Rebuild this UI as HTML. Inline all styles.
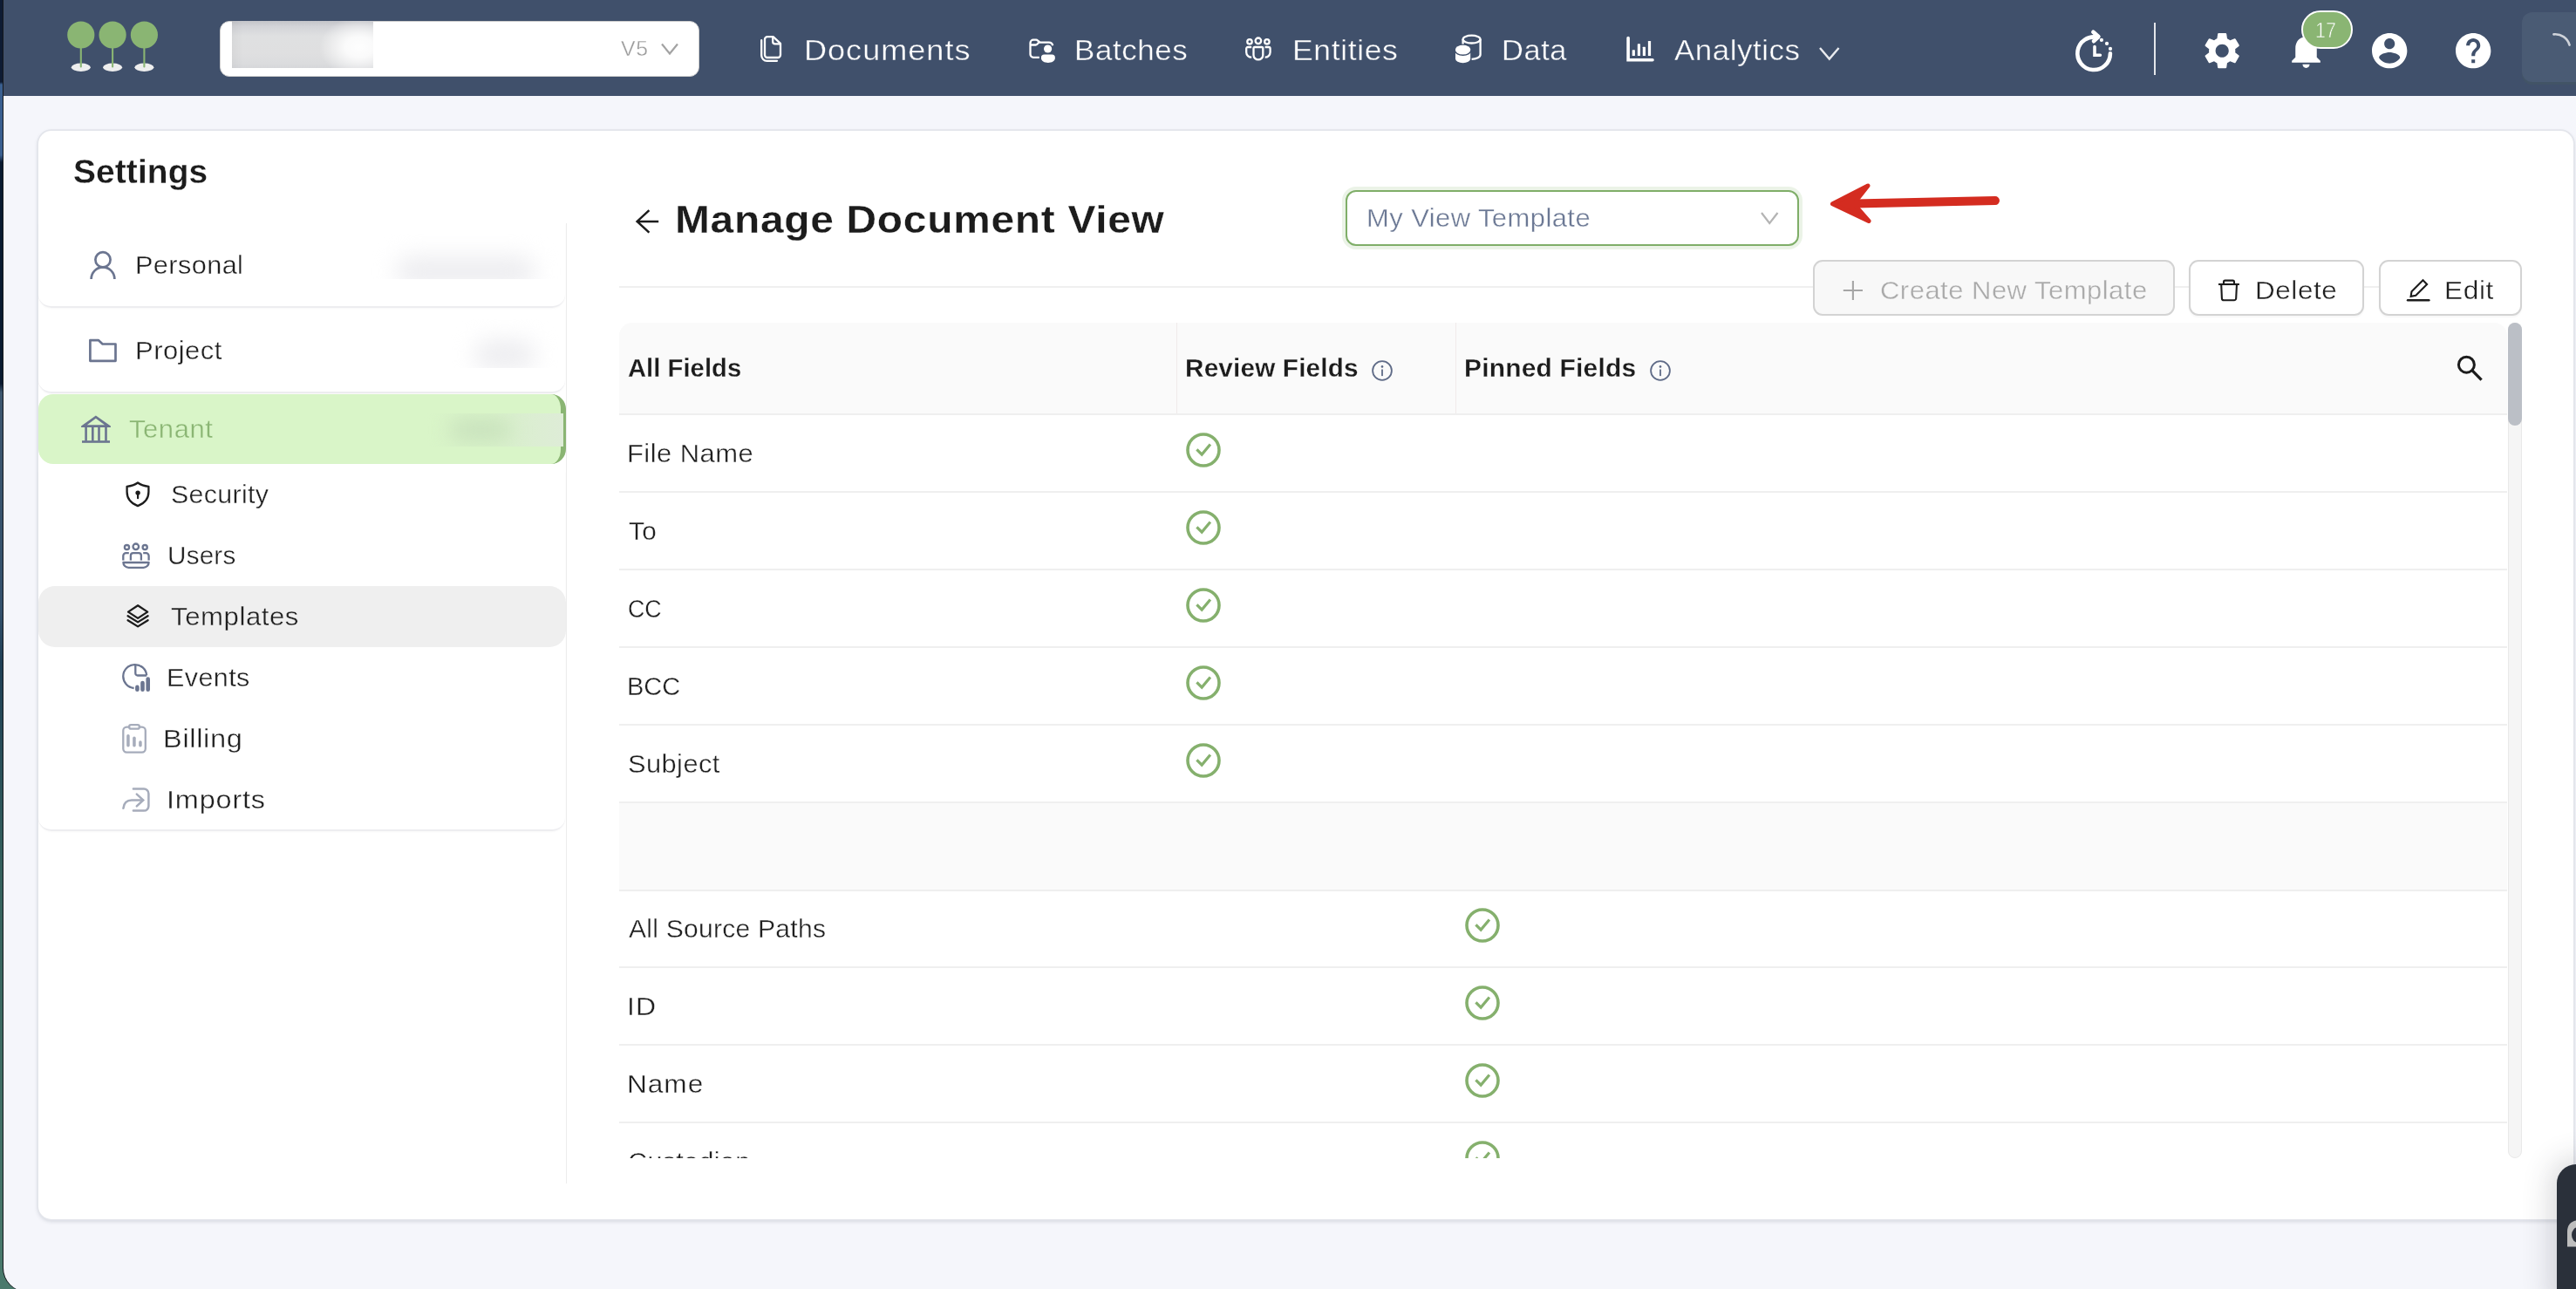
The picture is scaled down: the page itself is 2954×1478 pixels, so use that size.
<!DOCTYPE html>
<html lang="en">
<head>
<meta charset="utf-8">
<title>Settings - Manage Document View</title>
<style>
*{box-sizing:border-box;margin:0;padding:0}
html,body{width:2954px;height:1478px;overflow:hidden}
body{position:relative;font-family:"Liberation Sans",sans-serif;
 background:linear-gradient(180deg,#0e1b33 0,#0e1b33 94px,#3a5f8f 97px,#3a5f8f 178px,#0a1a30 186px,#0a1a30 440px,#3d566e 450px,#33506b 700px,#1f3f55 760px,#35605c 1000px,#4a7a6c 1478px)}
.abs,.t,svg.i{position:absolute}
.t{white-space:nowrap;transform-origin:0 50%;display:block}
.win{left:4px;top:0;width:2950px;height:1481px;background:#f5f6fb;border-bottom-left-radius:27px;box-shadow:-1px 0 0 #15181c}
.nav{left:4px;top:0;width:2950px;height:110px;background:#40506b}
.card{left:44px;top:150px;width:2907.3px;height:1248px;background:#fff;border-radius:15px;box-shadow:0 0 0 1.7px #e3e5eb,0 2px 5px rgba(40,50,70,.21)}
</style>
</head>
<body>
<div class="abs win"></div>
<div class="abs nav"></div>

<!-- ===== NAV ===== -->
<!-- logo -->
<svg class="i" style="left:70px;top:20px" width="120" height="70" viewBox="70 20 120 70">
 <g fill="#eeeeee"><ellipse cx="92.8" cy="77.2" rx="11" ry="4.7"/><ellipse cx="129.1" cy="77.2" rx="11" ry="4.7"/><ellipse cx="165.4" cy="77.2" rx="11" ry="4.7"/></g>
 <g stroke="#8ab573" stroke-width="2.1" stroke-linecap="round"><path d="M92.8 50V76.4M129.1 50V76.4M165.4 50V76.4"/></g>
 <g fill="#8ab573"><circle cx="92.8" cy="40" r="15.6"/><circle cx="129.1" cy="40" r="15.6"/><circle cx="165.4" cy="40" r="15.6"/></g>
</svg>
<!-- project select -->
<div class="abs" style="left:252px;top:23.5px;width:550px;height:64.5px;background:#fff;border:1.5px solid #cecece;border-radius:11px"></div>
<div class="abs" style="left:266px;top:24px;width:162px;height:54px;background:radial-gradient(ellipse 46px 34px at 146px 30px,rgba(255,255,255,.96) 0,rgba(255,255,255,.85) 35%,rgba(255,255,255,0) 100%),linear-gradient(90deg,rgba(0,0,0,.035) 0,rgba(0,0,0,0) 8%),linear-gradient(180deg,#c3c4c9 0,#d3d4d8 12%,#dfe0e1 32%,#dfdfe0 70%,#dbdcde 90%,#d6d7da 100%)"></div>
<svg class="i" style="left:756px;top:47px" width="24" height="18" viewBox="756 47 24 18"><path d="M759 50.5L768 61.5L777 50.5" fill="none" stroke="#a3a3a3" stroke-width="2.2"/></svg>

<svg class="i" style="left:868px;top:36px" width="34" height="40" viewBox="868 36 34 40" ><g fill="none" stroke="#ffffff" stroke-width="2.3" stroke-linejoin="round" stroke-linecap="round">
<path d="M880 42.1H886.6L895 49.9V63a3 3 0 0 1-3 3H880a3 3 0 0 1-3-3V45.1a3 3 0 0 1 3-3Z"/>
<path d="M886.2 42.6V47.8a2.6 2.6 0 0 0 2.6 2.6H894.6"/>
<path d="M873.2 46.2V63.5a6.3 6.3 0 0 0 6.3 6.3H891"/></g></svg>
<svg class="i" style="left:1176px;top:40px" width="40" height="36" viewBox="1176 40 40 36" ><g fill="none" stroke="#ffffff" stroke-width="2.3" stroke-linejoin="round" stroke-linecap="butt">
<path d="M1191.8 65.8H1185a3.5 3.5 0 0 1-3.5-3.5V49.2a3.5 3.5 0 0 1 3.5-3.5H1188.3a2.2 2.2 0 0 1 1.5.6L1192.6 48.6H1202.8a4.4 4.4 0 0 1 4.4 3.6"/>
<path d="M1181.5 51.5H1187.8a1.8 1.8 0 0 0 1.2-.5L1191.6 48.4"/></g>
<circle cx="1201.6" cy="56" r="4.6" fill="#ffffff"/>
<path d="M1193.9 66.2a3.6 3.6 0 0 1 3.6-3.6h8.8a3.6 3.6 0 0 1 3.6 3.6c0 4-3.8 5.7-8 5.7s-8-1.7-8-5.7Z" fill="#ffffff"/></svg>
<svg class="i" style="left:1424px;top:40px" width="38" height="34" viewBox="1424 40 38 34" ><g fill="none" stroke="#ffffff" stroke-width="2.3" stroke-linejoin="round" stroke-linecap="butt">
<circle cx="1442.9" cy="46.8" r="3.3"/><circle cx="1433" cy="47.8" r="2.7"/><circle cx="1452.9" cy="47.8" r="2.7"/>
<path d="M1439 54H1446.8a1.5 1.5 0 0 1 1.5 1.5V63a5.4 5.4 0 0 1-10.8 0V55.5a1.5 1.5 0 0 1 1.5-1.5Z"/>
<path d="M1435.2 54H1431a1.8 1.8 0 0 0-1.8 1.8V60a5.8 5.8 0 0 0 6 5.7"/>
<path d="M1450.6 54H1454.8a1.8 1.8 0 0 1 1.8 1.8V60a5.8 5.8 0 0 1-6 5.7"/></g></svg>
<svg class="i" style="left:1664px;top:36px" width="40" height="40" viewBox="1664 36 40 40" ><g fill="none" stroke="#ffffff" stroke-width="2.3">
<ellipse cx="1687.6" cy="45.1" rx="10" ry="4.4"/>
<path d="M1677.6 45.1V50.6M1697.6 45.1V62.4c0 3-4.4 5.2-10 5.4"/></g>
<path d="M1669 56.8V67.3a8.6 5 0 0 0 17.2 0V56.8Z" fill="#ffffff"/>
<path d="M1668.3 57.6a9.3 5.6 0 0 0 18.6 0" fill="none" stroke="#40506b" stroke-width="1.5"/>
<ellipse cx="1677.6" cy="56.6" rx="8.6" ry="4.9" fill="#ffffff"/></svg>
<svg class="i" style="left:1862px;top:38px" width="38" height="36" viewBox="1862 38 38 36" ><path d="M1867.1 43.5V68.7H1895" fill="none" stroke="#ffffff" stroke-width="3.6" stroke-linecap="round" stroke-linejoin="miter"/>
<g fill="#ffffff"><rect x="1871.7" y="57.2" width="3.2" height="6.8" rx=".6"/><rect x="1877.8" y="50.3" width="3.2" height="13.7" rx=".6"/><rect x="1883.8" y="53.7" width="3.2" height="10.3" rx=".6"/><rect x="1889.9" y="47" width="3.2" height="17" rx=".6"/></g></svg>
<svg class="i" style="left:2082px;top:50px" width="32" height="24" viewBox="2082 50 32 24" ><path d="M2087 55L2097.8 67.6L2108.6 55" fill="none" stroke="#e9ebef" stroke-width="2.4"/></svg>
<svg class="i" style="left:2374px;top:28px" width="54" height="58" viewBox="2374 28 54 58" ><g fill="none" stroke="#ffffff" stroke-linecap="round" stroke-linejoin="round">
<path d="M2405.4 42.9A18.8 18.8 0 1 0 2419.9 61.4" stroke-width="4.6"/>
<path d="M2400.4 36.7L2406.4 42L2401 47.2" stroke-width="4.6"/>
<path d="M2402 53.6V63.2H2408.4" stroke-width="3.6" stroke-linejoin="miter"/></g>
<g fill="#ffffff"><circle cx="2409.9" cy="45.9" r="2.1"/><circle cx="2416" cy="49.9" r="2.1"/><circle cx="2420" cy="55.9" r="2.1"/></g></svg>
<div class="abs" style="left:2470px;top:26px;width:2px;height:60px;background:#e4e6ea"></div>
<svg class="i" style="left:2522.80px;top:32.80px" width="50.4" height="50.4" viewBox="0 0 24 24"><path d="M19.14,12.94c0.04-0.3,0.06-0.61,0.06-0.94c0-0.32-0.02-0.64-0.07-0.94l2.03-1.58c0.18-0.14,0.23-0.41,0.12-0.61 l-1.92-3.32c-0.12-0.22-0.37-0.29-0.59-0.22l-2.39,0.96c-0.5-0.38-1.03-0.7-1.62-0.94L14.4,2.81c-0.04-0.24-0.24-0.41-0.48-0.41 h-3.84c-0.24,0-0.43,0.17-0.47,0.41L9.25,5.35C8.66,5.59,8.12,5.92,7.63,6.29L5.24,5.33c-0.22-0.08-0.47,0-0.59,0.22L2.74,8.87 C2.62,9.08,2.66,9.34,2.86,9.48l2.03,1.58C4.84,11.36,4.8,11.69,4.8,12s0.02,0.64,0.07,0.94l-2.03,1.58 c-0.18,0.14-0.23,0.41-0.12,0.61l1.92,3.32c0.12,0.22,0.37,0.29,0.59,0.22l2.39-0.96c0.5,0.38,1.03,0.7,1.62,0.94l0.36,2.54 c0.05,0.24,0.24,0.41,0.48,0.41h3.84c0.24,0,0.44-0.17,0.47-0.41l0.36-2.54c0.59-0.24,1.13-0.56,1.62-0.94l2.39,0.96 c0.22,0.08,0.47,0,0.59-0.22l1.92-3.32c0.12-0.22,0.07-0.47-0.12-0.61L19.14,12.94z M12,15.6c-1.98,0-3.6-1.62-3.6-3.6 s1.62-3.6,3.6-3.6s3.6,1.62,3.6,3.6S13.98,15.6,12,15.6z" fill="#ffffff"/></svg>
<svg class="i" style="left:2619.50px;top:33.10px" width="49" height="49" viewBox="0 0 24 24"><path d="M12 22c1.1 0 2-.9 2-2h-4c0 1.1.89 2 2 2zm6-6v-5c0-3.07-1.64-5.64-4.5-6.32V4c0-.83-.67-1.5-1.5-1.5s-1.5.67-1.5 1.5v.68C7.63 5.36 6 7.92 6 11v5l-2 2v1h16v-1l-2-2z" fill="#ffffff"/></svg>
<svg class="i" style="left:2715.80px;top:33.80px" width="48.4" height="48.4" viewBox="0 0 24 24"><path d="M12 2C6.48 2 2 6.48 2 12s4.48 10 10 10 10-4.48 10-10S17.52 2 12 2zm0 3c1.66 0 3 1.34 3 3s-1.34 3-3 3-3-1.34-3-3 1.34-3 3-3zm0 14.2c-2.5 0-4.71-1.28-6-3.22.03-1.99 4-3.08 6-3.08 1.99 0 5.97 1.09 6 3.08-1.29 1.94-3.5 3.22-6 3.22z" fill="#ffffff"/></svg>
<svg class="i" style="left:2811.80px;top:33.80px" width="48.4" height="48.4" viewBox="0 0 24 24"><path d="M12 2C6.48 2 2 6.48 2 12s4.48 10 10 10 10-4.48 10-10S17.52 2 12 2zm1 17h-2v-2h2v2zm2.07-7.75l-.9.92C13.45 12.9 13 13.5 13 15h-2v-.5c0-1.1.45-2.1 1.17-2.83l1.24-1.26c.37-.36.59-.86.59-1.41 0-1.1-.9-2-2-2s-2 .9-2 2H8c0-2.21 1.79-4 4-4s4 1.79 4 4c0 .88-.36 1.68-.93 2.25z" fill="#ffffff"/></svg>
<div class="abs" style="left:2638.5px;top:11.7px;width:59px;height:44.6px;border-radius:23px;background:#8ab573;border:2.2px solid #fff"></div>
<div class="abs" style="left:2892px;top:14px;width:80px;height:80px;border-radius:12px;background:#4a5b74;box-shadow:0 3px 0 #425466"></div>
<svg class="i" style="left:2920px;top:30px" width="34" height="30" viewBox="2920 30 34 30" ><path d="M2928.4 39.4A17 17 0 0 1 2946.6 51.6" fill="none" stroke="#cfd3da" stroke-width="2.6" stroke-linecap="round"/></svg>

<!-- ===== CARD ===== -->
<div class="abs card"></div>

<!-- sidebar -->
<div class="abs" style="left:648.5px;top:256px;width:1.5px;height:1101px;background:#ececec"></div>
<div class="abs" style="left:44px;top:256px;width:604px;height:97px;border-radius:0 0 15px 15px;border-bottom:2px solid #ededf0;box-shadow:0 1px 2px rgba(0,0,0,.03)"></div>
<div class="abs" style="left:44px;top:354px;width:604px;height:97px;border-radius:0 0 15px 15px;border-bottom:2px solid #ededf0;box-shadow:0 1px 2px rgba(0,0,0,.03)"></div>
<div class="abs" style="left:44px;top:452px;width:604.5px;height:80px;border-radius:17px;background:#d9f5c8;border-right:6px solid #8ab573"></div>
<div class="abs" style="left:44px;top:540px;width:604px;height:412.5px;border-radius:0 0 15px 15px;border-bottom:2px solid #ededf0;box-shadow:0 1px 2px rgba(0,0,0,.03)"></div>
<div class="abs" style="left:44px;top:672px;width:604.5px;height:70px;border-radius:19px;background:#efefef"></div>
<!-- blurred values -->
<div class="abs" style="left:424px;top:268px;width:220px;height:52px;overflow:hidden"><div class="abs" style="left:30px;top:26px;width:160px;height:34px;background:#ededf0;filter:blur(13px);border-radius:17px"></div></div>
<div class="abs" style="left:516px;top:366px;width:126px;height:56px;overflow:hidden"><div class="abs" style="left:28px;top:24px;width:70px;height:34px;background:#ededf0;filter:blur(13px);border-radius:17px"></div></div>
<div class="abs" style="left:486px;top:474px;width:160px;height:38px;overflow:hidden;background:linear-gradient(90deg,rgba(217,245,200,0) 0,rgba(217,242,203,.6) 45%,#dbeed1 75%,#deecd7 100%)"><div class="abs" style="left:30px;top:6px;width:70px;height:26px;background:#c9e2bd;filter:blur(11px);border-radius:13px"></div></div>

<svg class="i" style="left:100px;top:284px" width="36" height="38" viewBox="100 284 36 38" ><g fill="none" stroke="#6b7590" stroke-width="2.7"><circle cx="118" cy="297.8" r="8.6"/><path d="M104.6 320A13.4 13.6 0 0 1 131.4 320"/></g></svg>
<svg class="i" style="left:100px;top:386px" width="36" height="32" viewBox="100 386 36 32" ><path d="M103.4 390.1H112.8L117.6 394.5H132.5V413.8H103.4Z" fill="none" stroke="#6b7590" stroke-width="2.7" stroke-linejoin="round"/></svg>
<svg class="i" style="left:92px;top:474px" width="36" height="36" viewBox="92 474 36 36" ><g fill="#6b7590"><path fill-rule="evenodd" d="M109.9 476.4L126.9 488.6V489.9H93.1V488.6ZM109.9 479.7L99.8 487.2H120Z"/>
<rect x="97.3" y="489.5" width="2.6" height="16.2"/><rect x="105" y="489.5" width="2.6" height="16.2"/><rect x="112.2" y="489.5" width="2.6" height="16.2"/><rect x="120.2" y="489.5" width="2.6" height="16.2"/>
<rect x="94" y="505.2" width="32" height="2.6"/></g></svg>
<svg class="i" style="left:142px;top:550px" width="32" height="34" viewBox="142 550 32 34" ><path d="M158 553.5C154.6 556 150 557.4 145.6 557.8V564C145.6 572 151 577.4 158 580.1C165 577.4 170.4 572 170.4 564V557.8C166 557.4 161.4 556 158 553.5Z" fill="none" stroke="#1c1c1c" stroke-width="2.3" stroke-linejoin="round"/>
<circle cx="158.1" cy="565.1" r="2.7" fill="#1c1c1c"/><path d="M158.1 566V571.2" stroke="#1c1c1c" stroke-width="2.2" stroke-linecap="round"/></svg>
<svg class="i" style="left:138px;top:620px" width="36" height="34" viewBox="138 620 36 34" ><g fill="none" stroke="#6b7590" stroke-width="2.3" stroke-linejoin="round">
<circle cx="155.8" cy="626.8" r="3.3"/><circle cx="145.5" cy="627.6" r="2.6"/><circle cx="166.2" cy="627.6" r="2.6"/>
<path d="M149.9 642.6V636.9a2.8 2.8 0 0 1 2.8-2.8h6.4a2.8 2.8 0 0 1 2.8 2.8V642.6"/>
<path d="M147.8 634.1H144.5a3.2 3.2 0 0 0-3.2 3.2V642.6"/>
<path d="M164.2 634.1H167.4a3.2 3.2 0 0 1 3.2 3.2V642.6"/>
<path d="M141.4 645H170.6C170.6 648 168 650.8 164.5 650.8H147.5C144 650.8 141.4 648 141.4 645Z"/></g></svg>
<svg class="i" style="left:143px;top:690px" width="30" height="32" viewBox="143 690 30 32" ><g fill="none" stroke="#1c1c1c" stroke-width="2.3" stroke-linejoin="round" stroke-linecap="round">
<path d="M158.1 694.2L169.2 701.6L158.1 708.9L147 701.6Z"/>
<path d="M146.6 706.2L158.1 713.4L169.6 706.2"/><path d="M146.6 711.2L158.1 718.4L169.6 711.2"/></g></svg>
<svg class="i" style="left:138px;top:758px" width="36" height="38" viewBox="138 758 36 38" ><g fill="none" stroke="#6b7590" stroke-width="2.3" stroke-linejoin="round">
<path d="M168.2 774.4A13.5 13.5 0 1 0 153.6 789"/>
<path d="M155.3 762.2V772a2.5 2.5 0 0 0 2.5 2.5H168.2"/></g>
<g fill="#6b7590"><rect x="155.1" y="785.6" width="4.6" height="7.4" rx="2.3"/><rect x="161.2" y="780.8" width="4.6" height="12.2" rx="2.3"/><rect x="167.4" y="776.2" width="4.6" height="16.8" rx="2.3"/></g></svg>
<svg class="i" style="left:138px;top:828px" width="32" height="38" viewBox="138 828 32 38" ><g fill="none" stroke="#a6acbb" stroke-width="2.3" stroke-linejoin="round">
<path d="M148 833.7H145.3a4 4 0 0 0-4 4V858.6a4 4 0 0 0 4 4H162.8a4 4 0 0 0 4-4V837.7a4 4 0 0 0-4-4H160"/>
<rect x="148.1" y="831.2" width="11.8" height="4.5" rx="2.2"/></g>
<g fill="#a6acbb"><rect x="145.2" y="842" width="3.5" height="14.4" rx="1.75"/><rect x="152.2" y="844.5" width="3.5" height="11.9" rx="1.75"/><rect x="159.2" y="849.3" width="3.5" height="7.1" rx="1.75"/></g></svg>
<svg class="i" style="left:138px;top:900px" width="36" height="34" viewBox="138 900 36 34" ><g fill="none" stroke="#a6acbb" stroke-width="2.5" stroke-linecap="round" stroke-linejoin="miter">
<path d="M152.9 904.5H165a5.4 5.4 0 0 1 5.4 5.4V924.2a5.4 5.4 0 0 1-5.4 5.4H152.9"/>
<path d="M141.4 926.8C142 921 145.5 917.4 151 917.4H163.6"/>
<path d="M156.8 910.6L164.2 917.4L156.8 924.3"/></g></svg>

<!-- ===== MAIN ===== -->
<!-- hr -->
<div class="abs" style="left:710px;top:327.5px;width:2182px;height:2px;background:#efefef"></div>
<!-- template select -->
<div class="abs" style="left:1543px;top:218px;width:520px;height:64px;border:2px solid #7fae68;border-radius:12px;background:#fff;box-shadow:0 0 0 4px rgba(138,181,115,.17)"></div>
<svg class="i" style="left:2016px;top:240px" width="28" height="20" viewBox="2016 240 28 20"><path d="M2020 244L2029.2 256L2038.5 244" fill="none" stroke="#b4b4b4" stroke-width="2.2"/></svg>
<!-- red arrow -->
<svg class="i" style="left:2090px;top:200px" width="210" height="66" viewBox="2090 200 210 66">
 <path d="M2127 233.6L2288 230" stroke="#d42c20" stroke-width="10" stroke-linecap="round" fill="none"/>
 <path d="M2101.5 233.7L2142 213L2129 229.5L2129 237.5L2143 253.5Z" fill="#d42c20" stroke="#d42c20" stroke-width="5" stroke-linejoin="round"/>
</svg>
<!-- buttons -->
<div class="abs" style="left:2079px;top:298px;width:415px;height:64px;border:2px solid #d3d3d3;border-radius:11px;background:#f8f8f8"></div>
<div class="abs" style="left:2510px;top:298px;width:200.5px;height:64px;border:2px solid #d3d3d3;border-radius:11px;background:#fff;box-shadow:0 2px 2px rgba(0,0,0,.035)"></div>
<div class="abs" style="left:2727.5px;top:298px;width:164px;height:64px;border:2px solid #d3d3d3;border-radius:11px;background:#fff;box-shadow:0 2px 2px rgba(0,0,0,.035)"></div>

<!-- table -->
<div class="abs" style="left:710px;top:370px;width:2165px;height:958px;overflow:hidden;border-radius:15px 15px 0 0">
 <div class="abs" style="left:0;top:0;width:2165px;height:104px;background:#fafafa"></div>
 <div class="abs" style="left:638.5px;top:0;width:1.5px;height:104px;background:#f0eaea"></div>
 <div class="abs" style="left:958.5px;top:0;width:1.5px;height:104px;background:#f0eaea"></div>
 <div class="abs" style="left:0;top:104px;width:2165px;height:2px;background:#efefef"></div>
 <div class="abs" style="left:0;top:193px;width:2165px;height:2px;background:#efefef"></div>
 <div class="abs" style="left:0;top:282px;width:2165px;height:2px;background:#efefef"></div>
 <div class="abs" style="left:0;top:371px;width:2165px;height:2px;background:#efefef"></div>
 <div class="abs" style="left:0;top:460px;width:2165px;height:2px;background:#efefef"></div>
 <div class="abs" style="left:0;top:549px;width:2165px;height:2px;background:#efefef"></div>
 <div class="abs" style="left:0;top:551px;width:2165px;height:99px;background:#fafafa"></div>
 <div class="abs" style="left:0;top:650px;width:2165px;height:2px;background:#efefef"></div>
 <div class="abs" style="left:0;top:738px;width:2165px;height:2px;background:#efefef"></div>
 <div class="abs" style="left:0;top:827px;width:2165px;height:2px;background:#efefef"></div>
 <div class="abs" style="left:0;top:916px;width:2165px;height:2px;background:#efefef"></div>
 <div class="abs" style="left:0;top:918px;width:2165px;height:40px;overflow:hidden">
<span class="t" style="left:9.57px;top:27.45px;font-size:29.0px;line-height:35px;letter-spacing:0.335px;-webkit-text-stroke:0.36px #ffffff;font-weight:400;color:#1f1f1f;transform:scaleX(1.0516)">Custodian</span>
<svg class="i" style="left:968px;top:18px" width="44" height="44" viewBox="-22 -22 44 44"><circle r="18" fill="none" stroke="#85b06d" stroke-width="3.6"/><path d="M-7.6 -0.7L-1.8 5.1L7.9 -6.5" fill="none" stroke="#85b06d" stroke-width="3.2"/></svg>
 </div>
</div>
<!-- scrollbar -->
<div class="abs" style="left:2876px;top:370px;width:16px;height:958px;background:#f5f5f5;border:1px solid #e9e9e9;border-radius:8px"></div>
<div class="abs" style="left:2876px;top:370px;width:16px;height:118px;background:#bbbfc6;border-radius:8px"></div>

<svg class="i" style="left:726px;top:238px" width="32" height="32" viewBox="726 238 32 32" ><path d="M744.4 241.2L730.6 253.9L744.4 266.7M730.6 253.9H755.2" fill="none" stroke="#1c1c1c" stroke-width="2.5" stroke-linejoin="miter"/></svg>
<svg class="i" style="left:2110px;top:318px" width="30" height="30" viewBox="2110 318 30 30" ><path d="M2113.8 333H2136M2124.9 321.9V344" fill="none" stroke="#a6a6a6" stroke-width="2.1"/></svg>
<svg class="i" style="left:2540px;top:316px" width="32" height="32" viewBox="2540 316 32 32" ><g fill="none" stroke="#1c1c1c" stroke-width="2.1" stroke-linejoin="round">
<path d="M2544 326H2567.9"/><path d="M2550 326V323.2a1.6 1.6 0 0 1 1.6-1.6H2560.4a1.6 1.6 0 0 1 1.6 1.6V326"/>
<path d="M2547.2 326L2547.9 342a2.3 2.3 0 0 0 2.3 2.3H2561.9a2.3 2.3 0 0 0 2.3-2.3L2565 326"/></g></svg>
<svg class="i" style="left:2756px;top:316px" width="34" height="32" viewBox="2756 316 34 32" ><path d="M2761 344.3H2785.4" stroke="#1c1c1c" stroke-width="2.4" stroke-linecap="round"/>
<path d="M2778.5 321.3L2783.1 325.9L2770.3 338.7L2764.6 339.9L2765.5 334.3Z" fill="none" stroke="#1c1c1c" stroke-width="2.1" stroke-linejoin="miter"/></svg>
<svg class="i" style="left:1570.9px;top:410.8px" width="28" height="28" viewBox="-14 -14 28 28"><circle r="10.9" fill="none" stroke="#5f6b87" stroke-width="1.8"/><rect x="-.9" y="-1.5" width="1.8" height="7.6" fill="#5f6b87"/><circle cy="-4.6" r="1.3" fill="#5f6b87"/></svg>
<svg class="i" style="left:1890px;top:410.8px" width="28" height="28" viewBox="-14 -14 28 28"><circle r="10.9" fill="none" stroke="#5f6b87" stroke-width="1.8"/><rect x="-.9" y="-1.5" width="1.8" height="7.6" fill="#5f6b87"/><circle cy="-4.6" r="1.3" fill="#5f6b87"/></svg>
<svg class="i" style="left:2814px;top:404px" width="36" height="36" viewBox="2814 404 36 36" ><circle cx="2828.4" cy="418.2" r="9" fill="none" stroke="#1c1c1c" stroke-width="3"/><path d="M2834.8 424.6L2845.6 435.6" stroke="#1c1c1c" stroke-width="3.2"/></svg>
<svg class="i" style="left:1358px;top:493.79999999999995px" width="44" height="44" viewBox="-22 -22 44 44"><circle r="18" fill="none" stroke="#85b06d" stroke-width="3.6"/><path d="M-7.6 -0.7L-1.8 5.1L7.9 -6.5" fill="none" stroke="#85b06d" stroke-width="3.2"/></svg>
<svg class="i" style="left:1358px;top:582.8px" width="44" height="44" viewBox="-22 -22 44 44"><circle r="18" fill="none" stroke="#85b06d" stroke-width="3.6"/><path d="M-7.6 -0.7L-1.8 5.1L7.9 -6.5" fill="none" stroke="#85b06d" stroke-width="3.2"/></svg>
<svg class="i" style="left:1358px;top:671.8px" width="44" height="44" viewBox="-22 -22 44 44"><circle r="18" fill="none" stroke="#85b06d" stroke-width="3.6"/><path d="M-7.6 -0.7L-1.8 5.1L7.9 -6.5" fill="none" stroke="#85b06d" stroke-width="3.2"/></svg>
<svg class="i" style="left:1358px;top:760.8px" width="44" height="44" viewBox="-22 -22 44 44"><circle r="18" fill="none" stroke="#85b06d" stroke-width="3.6"/><path d="M-7.6 -0.7L-1.8 5.1L7.9 -6.5" fill="none" stroke="#85b06d" stroke-width="3.2"/></svg>
<svg class="i" style="left:1358px;top:849.8px" width="44" height="44" viewBox="-22 -22 44 44"><circle r="18" fill="none" stroke="#85b06d" stroke-width="3.6"/><path d="M-7.6 -0.7L-1.8 5.1L7.9 -6.5" fill="none" stroke="#85b06d" stroke-width="3.2"/></svg>
<svg class="i" style="left:1678px;top:1039px" width="44" height="44" viewBox="-22 -22 44 44"><circle r="18" fill="none" stroke="#85b06d" stroke-width="3.6"/><path d="M-7.6 -0.7L-1.8 5.1L7.9 -6.5" fill="none" stroke="#85b06d" stroke-width="3.2"/></svg>
<svg class="i" style="left:1678px;top:1127.8px" width="44" height="44" viewBox="-22 -22 44 44"><circle r="18" fill="none" stroke="#85b06d" stroke-width="3.6"/><path d="M-7.6 -0.7L-1.8 5.1L7.9 -6.5" fill="none" stroke="#85b06d" stroke-width="3.2"/></svg>
<svg class="i" style="left:1678px;top:1216.7px" width="44" height="44" viewBox="-22 -22 44 44"><circle r="18" fill="none" stroke="#85b06d" stroke-width="3.6"/><path d="M-7.6 -0.7L-1.8 5.1L7.9 -6.5" fill="none" stroke="#85b06d" stroke-width="3.2"/></svg>

<!-- chat widget -->
<div class="abs" style="left:2932px;top:1335px;width:40px;height:170px;background:#2a303a;border-radius:22px 0 0 22px;box-shadow:0 0 34px 6px rgba(50,50,60,.2)"></div>
<svg class="i" style="left:2943px;top:1395px" width="11" height="36" viewBox="0 0 11 36"><path d="M11 4.5C5 5.5 1 10 1 17v17.5h10z" fill="#bebebe"/><ellipse cx="13.5" cy="21" rx="7.5" ry="9" fill="#2b303b"/></svg>

<!-- ===== TEXT ===== -->
<span class="t" style="left:711.50px;top:42.36px;font-size:23.5px;line-height:28px;letter-spacing:0.628px;-webkit-text-stroke:0.36px #ffffff;font-weight:400;color:#9c9c9c;transform:scaleX(1.0556)">V5</span>
<span class="t" style="left:921.68px;top:39.24px;font-size:32.5px;line-height:39px;letter-spacing:0.866px;-webkit-text-stroke:0.4px #40506b;font-weight:400;color:#ffffff;transform:scaleX(1.1118)">Documents</span>
<span class="t" style="left:1231.77px;top:39.24px;font-size:32.5px;line-height:39px;letter-spacing:0.564px;-webkit-text-stroke:0.4px #40506b;font-weight:400;color:#ffffff;transform:scaleX(1.0745)">Batches</span>
<span class="t" style="left:1481.72px;top:39.24px;font-size:32.5px;line-height:39px;letter-spacing:0.547px;-webkit-text-stroke:0.4px #40506b;font-weight:400;color:#ffffff;transform:scaleX(1.0950)">Entities</span>
<span class="t" style="left:1722.31px;top:39.24px;font-size:32.5px;line-height:39px;letter-spacing:0.536px;-webkit-text-stroke:0.4px #40506b;font-weight:400;color:#ffffff;transform:scaleX(1.0600)">Data</span>
<span class="t" style="left:1919.50px;top:39.24px;font-size:32.5px;line-height:39px;letter-spacing:0.487px;-webkit-text-stroke:0.4px #40506b;font-weight:400;color:#ffffff;transform:scaleX(1.0758)">Analytics</span>
<span class="t" style="left:2655.46px;top:19.91px;font-size:24.5px;line-height:29px;-webkit-text-stroke:0.6px #8ab573;font-weight:400;color:#ffffff;transform:scaleX(0.8776)">17</span>
<span class="t" style="left:84.39px;top:173.66px;font-size:38.5px;line-height:46px;letter-spacing:0.097px;-webkit-text-stroke:0.26px #ffffff;font-weight:700;color:#1c1c1c;transform:scaleX(1.0107)">Settings</span>
<span class="t" style="left:155.10px;top:287.45px;font-size:29.0px;line-height:35px;letter-spacing:0.373px;-webkit-text-stroke:0.36px #ffffff;font-weight:400;color:#1f1f1f;transform:scaleX(1.0585)">Personal</span>
<span class="t" style="left:155.07px;top:385.45px;font-size:29.0px;line-height:35px;letter-spacing:0.416px;-webkit-text-stroke:0.36px #ffffff;font-weight:400;color:#1f1f1f;transform:scaleX(1.0708)">Project</span>
<span class="t" style="left:148.01px;top:474.95px;font-size:29.0px;line-height:35px;letter-spacing:0.492px;-webkit-text-stroke:0.36px #d9f5c8;font-weight:400;color:#8ab573;transform:scaleX(1.0709)">Tenant</span>
<span class="t" style="left:195.55px;top:550.45px;font-size:29.0px;line-height:35px;letter-spacing:0.292px;-webkit-text-stroke:0.36px #ffffff;font-weight:400;color:#1f1f1f;transform:scaleX(1.0482)">Security</span>
<span class="t" style="left:191.64px;top:619.95px;font-size:29.0px;line-height:35px;letter-spacing:0.182px;-webkit-text-stroke:0.36px #ffffff;font-weight:400;color:#1f1f1f;transform:scaleX(1.0239)">Users</span>
<span class="t" style="left:195.51px;top:689.95px;font-size:29.0px;line-height:35px;letter-spacing:0.495px;-webkit-text-stroke:0.36px #efefef;font-weight:400;color:#1f1f1f;transform:scaleX(1.0759)">Templates</span>
<span class="t" style="left:191.11px;top:759.95px;font-size:29.0px;line-height:35px;letter-spacing:0.371px;-webkit-text-stroke:0.36px #ffffff;font-weight:400;color:#1f1f1f;transform:scaleX(1.0533)">Events</span>
<span class="t" style="left:187.45px;top:829.95px;font-size:29.0px;line-height:35px;letter-spacing:0.579px;-webkit-text-stroke:0.36px #ffffff;font-weight:400;color:#1f1f1f;transform:scaleX(1.1241)">Billing</span>
<span class="t" style="left:190.96px;top:899.95px;font-size:29.0px;line-height:35px;letter-spacing:0.714px;-webkit-text-stroke:0.36px #ffffff;font-weight:400;color:#1f1f1f;transform:scaleX(1.1197)">Imports</span>
<span class="t" style="left:774.01px;top:224.91px;font-size:45.0px;line-height:54px;letter-spacing:0.688px;-webkit-text-stroke:0.26px #ffffff;font-weight:700;color:#1c1c1c;transform:scaleX(1.0634)">Manage Document View</span>
<span class="t" style="left:1567.08px;top:233.45px;font-size:29.0px;line-height:35px;letter-spacing:0.415px;-webkit-text-stroke:0.36px #ffffff;font-weight:400;color:#6b7894;transform:scaleX(1.0671)">My View Template</span>
<span class="t" style="left:2155.55px;top:315.95px;font-size:29.0px;line-height:35px;letter-spacing:0.431px;-webkit-text-stroke:0.36px #f8f8f8;font-weight:400;color:#a9a9a9;transform:scaleX(1.0702)">Create New Template</span>
<span class="t" style="left:2585.54px;top:316.45px;font-size:29.0px;line-height:35px;letter-spacing:0.532px;-webkit-text-stroke:0.36px #ffffff;font-weight:400;color:#1f1f1f;transform:scaleX(1.0837)">Delete</span>
<span class="t" style="left:2802.53px;top:316.45px;font-size:29.0px;line-height:35px;letter-spacing:0.568px;-webkit-text-stroke:0.36px #ffffff;font-weight:400;color:#1f1f1f;transform:scaleX(1.0907)">Edit</span>
<span class="t" style="left:720.04px;top:405.45px;font-size:29.0px;line-height:35px;letter-spacing:0.040px;-webkit-text-stroke:0.26px #fafafa;font-weight:700;color:#1c1c1c;transform:scaleX(1.0067)">All Fields</span>
<span class="t" style="left:1359.14px;top:405.45px;font-size:29.0px;line-height:35px;letter-spacing:0.163px;-webkit-text-stroke:0.26px #fafafa;font-weight:700;color:#1c1c1c;transform:scaleX(1.0248)">Review Fields</span>
<span class="t" style="left:1679.13px;top:405.45px;font-size:29.0px;line-height:35px;letter-spacing:0.205px;-webkit-text-stroke:0.26px #fafafa;font-weight:700;color:#1c1c1c;transform:scaleX(1.0319)">Pinned Fields</span>
<span class="t" style="left:718.58px;top:503.45px;font-size:29.0px;line-height:35px;letter-spacing:0.432px;-webkit-text-stroke:0.36px #ffffff;font-weight:400;color:#1f1f1f;transform:scaleX(1.0669)">File Name</span>
<span class="t" style="left:720.54px;top:592.45px;font-size:29.0px;line-height:35px;letter-spacing:0.293px;-webkit-text-stroke:0.36px #ffffff;font-weight:400;color:#1f1f1f;transform:scaleX(1.0241)">To</span>
<span class="t" style="left:719.74px;top:681.45px;font-size:29.0px;line-height:35px;-webkit-text-stroke:0.36px #ffffff;font-weight:400;color:#1f1f1f;transform:scaleX(0.9236)">CC</span>
<span class="t" style="left:718.73px;top:770.45px;font-size:29.0px;line-height:35px;letter-spacing:0.006px;-webkit-text-stroke:0.36px #ffffff;font-weight:400;color:#1f1f1f;transform:scaleX(1.0005)">BCC</span>
<span class="t" style="left:720.04px;top:859.45px;font-size:29.0px;line-height:35px;letter-spacing:0.404px;-webkit-text-stroke:0.36px #ffffff;font-weight:400;color:#1f1f1f;transform:scaleX(1.0626)">Subject</span>
<span class="t" style="left:721.00px;top:1048.45px;font-size:29.0px;line-height:35px;letter-spacing:0.222px;-webkit-text-stroke:0.36px #ffffff;font-weight:400;color:#1f1f1f;transform:scaleX(1.0378)">All Source Paths</span>
<span class="t" style="left:718.50px;top:1137.45px;font-size:29.0px;line-height:35px;letter-spacing:1.026px;-webkit-text-stroke:0.36px #ffffff;font-weight:400;color:#1f1f1f;transform:scaleX(1.1026)">ID</span>
<span class="t" style="left:718.53px;top:1226.45px;font-size:29.0px;line-height:35px;letter-spacing:0.879px;-webkit-text-stroke:0.36px #ffffff;font-weight:400;color:#1f1f1f;transform:scaleX(1.0908)">Name</span>
</body>
</html>
